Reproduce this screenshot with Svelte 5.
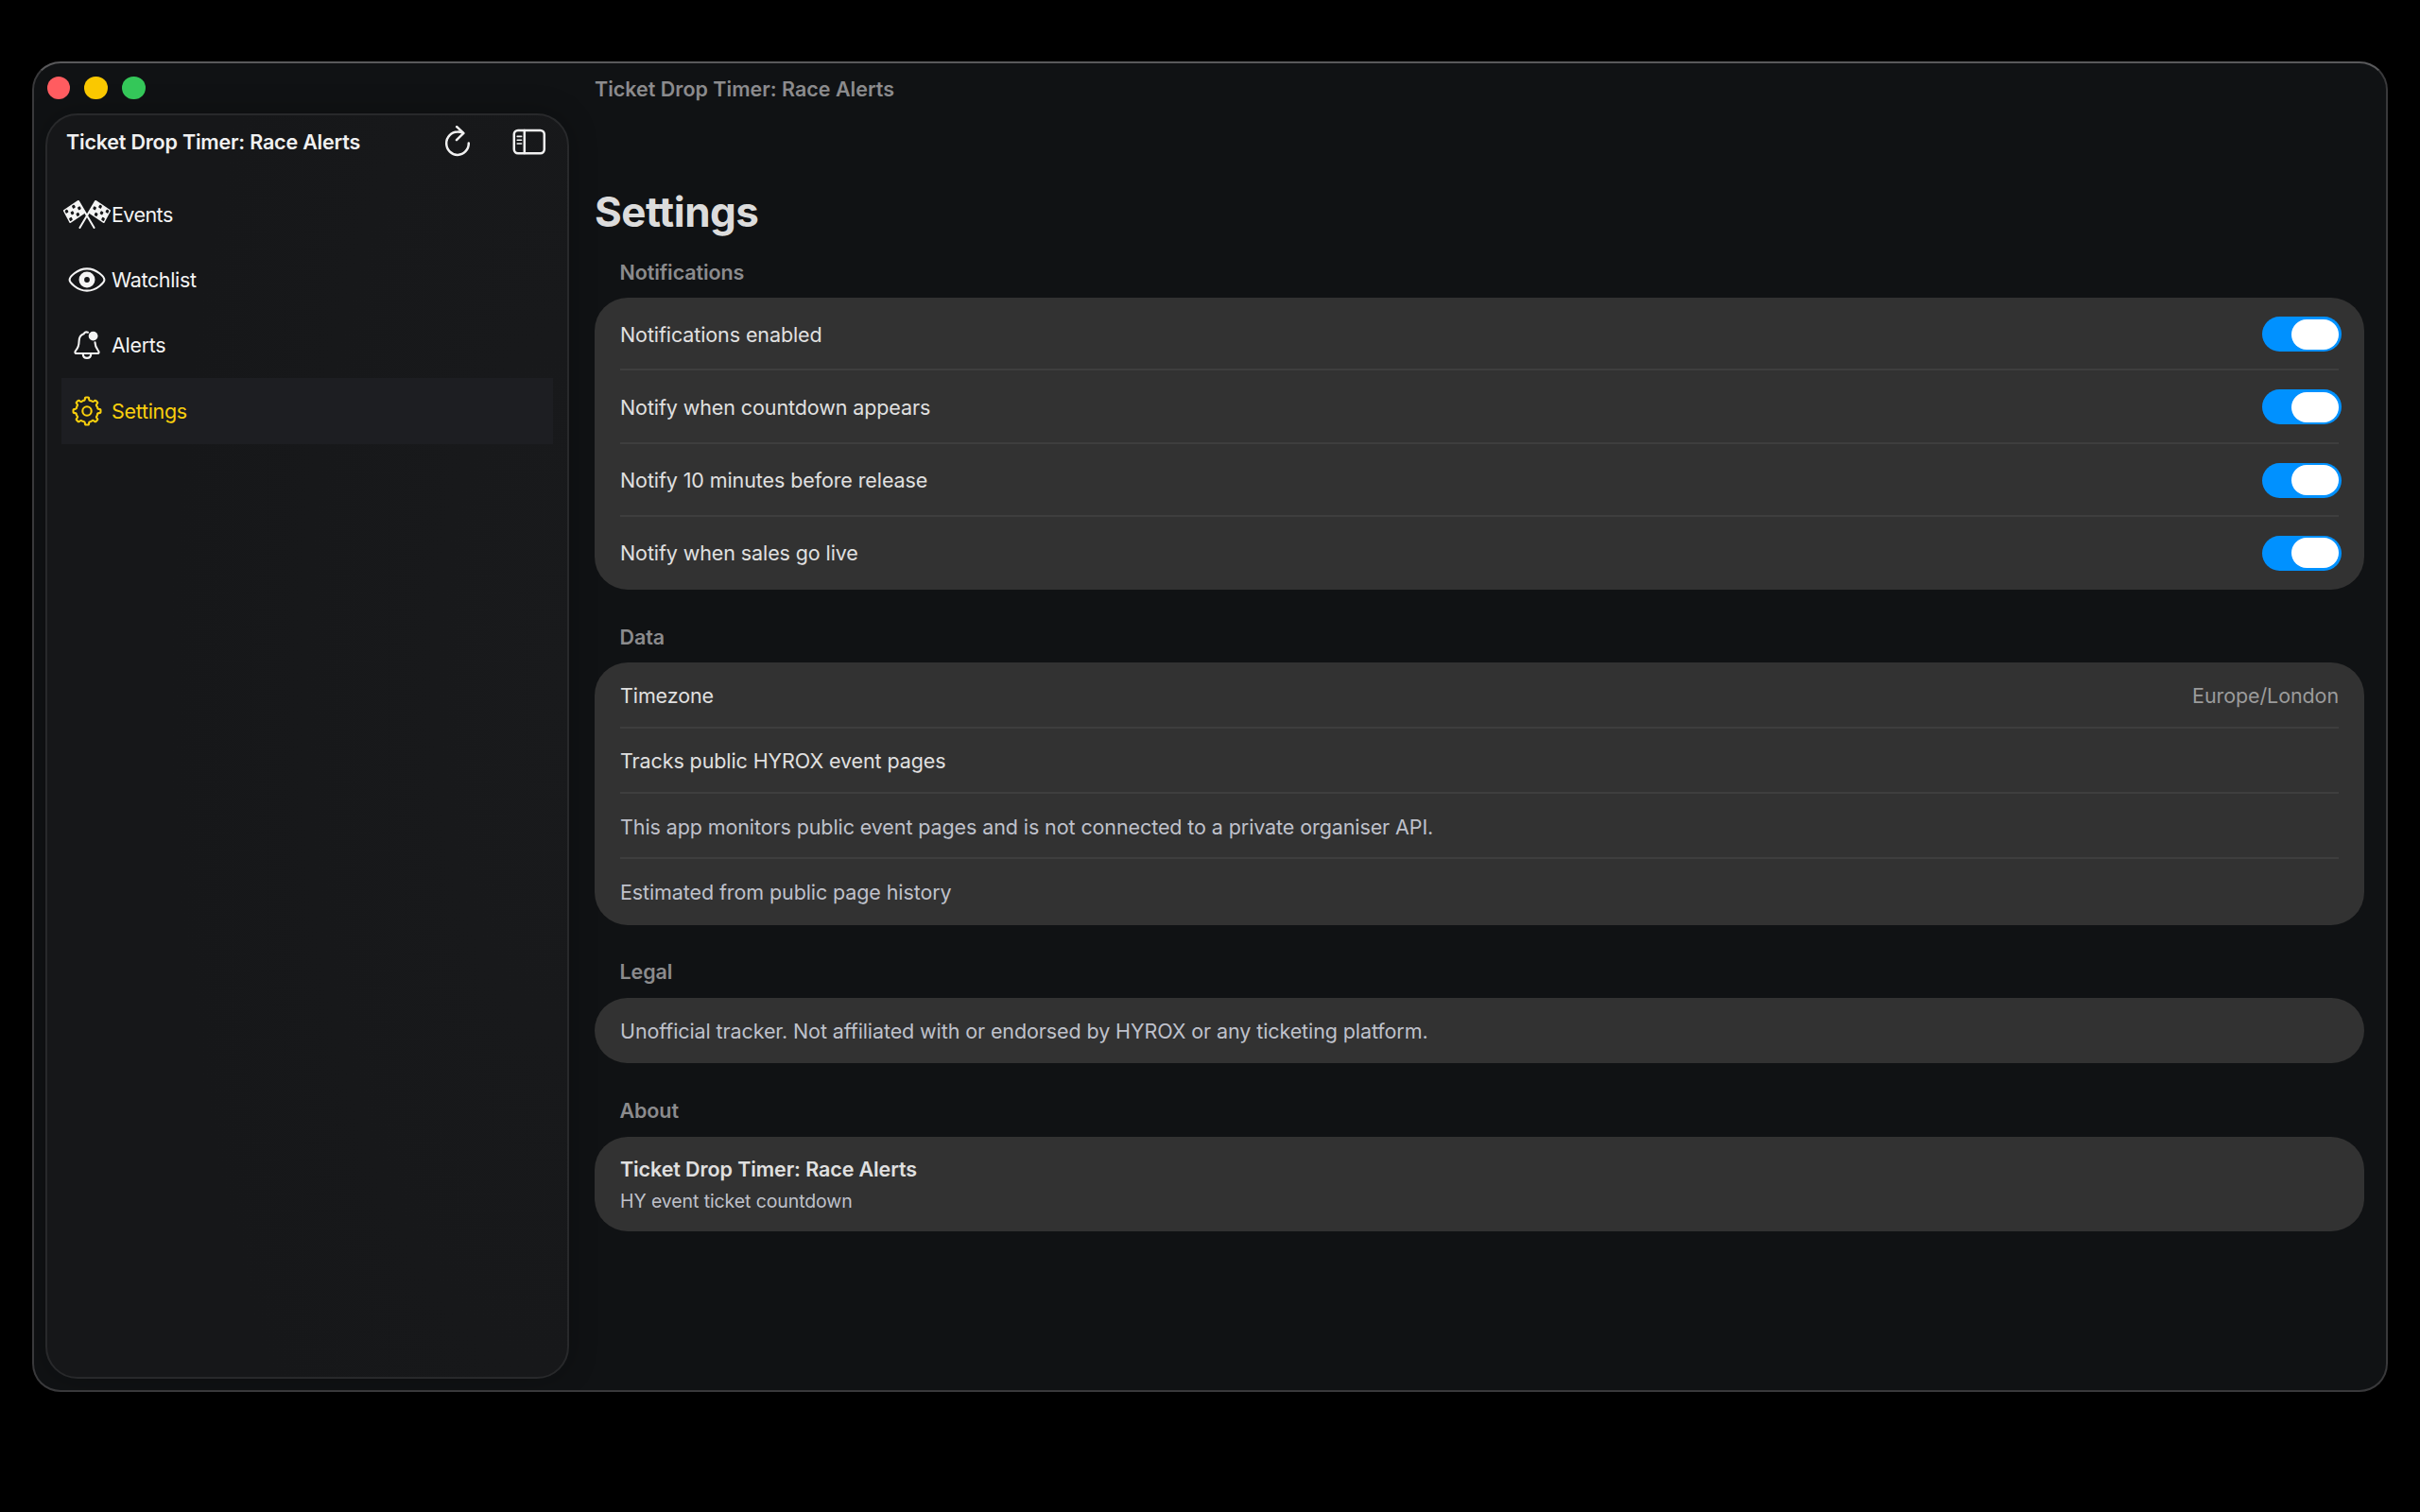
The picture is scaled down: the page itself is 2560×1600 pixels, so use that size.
<script>
    const appName = 'Ticket Drop Timer: Race Alerts';

    const navItems = [
        { id: 'events', label: 'Events', track: -0.55 },
        { id: 'watchlist', label: 'Watchlist', track: -0.35 },
        { id: 'alerts', label: 'Alerts', track: -0.3 },
        { id: 'settings', label: 'Settings', track: -0.3 }
    ];

    let selected = $state('settings');

    let toggles = $state([
        { label: 'Notifications enabled', on: true },
        { label: 'Notify when countdown appears', on: true },
        { label: 'Notify 10 minutes before release', on: true },
        { label: 'Notify when sales go live', on: true }
    ]);

    // dark cells of the 4x3 chequered flag
    const cells = [[1, 0], [3, 0], [0, 1], [2, 1], [1, 2], [3, 2]];

    // gear outline: eight rounded teeth around the centre
    function gearPath(cx, cy, teeth = 8) {
        const point = (r, deg) => {
            const a = (deg - 90) * Math.PI / 180;
            return `${(cx + r * Math.cos(a)).toFixed(2)} ${(cy + r * Math.sin(a)).toFixed(2)}`;
        };
        let d = '';
        for (let i = 0; i < teeth; i++) {
            const c = i * 360 / teeth;
            d += `${i ? 'L' : 'M'}${point(12.9, c - 9.5)} Q${point(14.7, c - 8.5)} ${point(14.5, c - 4)}`;
            d += ` L${point(14.5, c + 4)} Q${point(14.7, c + 8.5)} ${point(12.9, c + 9.5)}`;
            d += ` Q${point(11.2, c + 12)} ${point(11.6, c + 18)} L${point(11.8, c + 27)} Q${point(11.2, c + 33)} ${point(12.9, c + 35.5)}`;
        }
        return d + 'Z';
    }
</script>

<div class="window">
    <div class="left">
        <div class="lights">
            <span class="light red"></span>
            <span class="light yellow"></span>
            <span class="light green"></span>
        </div>

        <aside class="sidebar">
            <div class="sidebar-header">
                <span class="sidebar-title">{appName}</span>
                <button class="tool refresh" aria-label="Refresh">
                    <svg width="30" height="34" viewBox="0 0 30 34">
                        <path d="M26.8 18.5 A11.8 12.2 0 1 1 15 6.5 Q18 6.4 20.6 7.6" />
                        <path d="M14.2 1.2 L21.4 7.9 L14 15.2" />
                    </svg>
                </button>
                <button class="tool" aria-label="Toggle sidebar">
                    <svg width="36" height="28" viewBox="0 0 36 28">
                        <rect x="1.8" y="1.9" width="32" height="24.4" rx="4.2" />
                        <path d="M12.8 2 V26" />
                        <path class="thin" d="M5.2 8.4 H9.6 M5.2 12.2 H9.6 M5.2 16 H9.6" />
                    </svg>
                </button>
            </div>

            <nav>
                {#each navItems as item}
                    <button class="nav-item" class:active={selected === item.id} onclick={() => selected = item.id}>
                        <span class="nav-icon">
                            {#if item.id === 'events'}
                                <svg width="52" height="32" viewBox="0 0 52 32">
                                    {#each ['', 'translate(52 0) scale(-1 1)'] as flip}
                                        <g transform={flip}>
                                            <path class="pole" d="M17 2 L33.6 30" />
                                            <g transform="matrix(-3.7 2.5 2.2 4.1 16.4 1.9)">
                                                <rect class="cloth" width="4" height="3" />
                                                {#each cells as [x, y]}
                                                    <rect class="cell" x={x + 0.14} y={y + 0.14} width="0.72" height="0.72" rx="0.2" />
                                                {/each}
                                            </g>
                                        </g>
                                    {/each}
                                </svg>
                            {:else if item.id === 'watchlist'}
                                <svg width="42" height="28" viewBox="0 0 42 28">
                                    <path class="line" d="M2.6 14 C2.6 11.6 10 2.4 21 2.4 C32 2.4 39.4 11.6 39.4 14 C39.4 16.4 32 25.6 21 25.6 C10 25.6 2.6 16.4 2.6 14 Z" />
                                    <circle class="iris" cx="21" cy="14" r="5.7" />
                                </svg>
                            {:else if item.id === 'alerts'}
                                <svg width="30" height="32" viewBox="0 0 30 32">
                                    <path class="line" d="M16 2.7 C13.8 1.9 12.2 2.8 11.6 4.3 C7.9 5.5 6.7 8.6 6.6 12 C6.5 17.2 5.9 18.8 3.4 21.6 C1.8 23.4 2.1 25 4 25 H26 C27.9 25 28.2 23.4 26.6 21.6 C24.5 19.2 23.7 17.6 23.5 13.4" />
                                    <path class="line" d="M10.7 25.4 C11 31.4 19 31.4 19.3 25.4" />
                                    <circle class="dot" cx="21.6" cy="6.6" r="4.9" />
                                </svg>
                            {:else}
                                <svg width="32" height="32" viewBox="0 0 32 32">
                                    <path class="line" d={gearPath(16, 16)} />
                                    <circle class="line" cx="16" cy="16" r="4.7" />
                                </svg>
                            {/if}
                        </span>
                        <span class="nav-label" style="letter-spacing: {item.track}px">{item.label}</span>
                    </button>
                {/each}
            </nav>
        </aside>
    </div>

    <main>
        <div class="titlebar">{appName}</div>
        <h1>Settings</h1>

        <section>
            <h2>Notifications</h2>
            <div class="card">
                {#each toggles as toggle}
                    <div class="row tall">
                        <span>{toggle.label}</span>
                        <button class="switch" class:on={toggle.on} role="switch" aria-checked={toggle.on} aria-label={toggle.label} onclick={() => toggle.on = !toggle.on}>
                            <span class="knob"></span>
                        </button>
                    </div>
                {/each}
            </div>
        </section>

        <section>
            <h2>Data</h2>
            <div class="card">
                <div class="row"><span>Timezone</span><span class="value">Europe/London</span></div>
                <div class="row tight"><span>Tracks public HYROX event pages</span></div>
                <div class="row muted"><span>This app monitors public event pages and is not connected to a private organiser API.</span></div>
                <div class="row muted"><span>Estimated from public page history</span></div>
            </div>
        </section>

        <section>
            <h2>Legal</h2>
            <div class="card">
                <div class="row muted"><span>Unofficial tracker. Not affiliated with or endorsed by HYROX or any ticketing platform.</span></div>
            </div>
        </section>

        <section>
            <h2>About</h2>
            <div class="card about">
                <div class="about-title">{appName}</div>
                <div class="about-sub">HY event ticket countdown</div>
            </div>
        </section>
    </main>
</div>

<style>
    :global(body) {
        background: #000;
        overflow: hidden;
    }

    :global(#app) {
        display: flow-root;
    }

    .window {
        box-sizing: border-box;
        display: flex;
        width: 2492px;
        height: 1408px;
        margin: 65px 0 0 34px;
        border: 2px solid #39393b;
        border-top-color: #59595b;
        border-radius: 30px;
        background: #101214;
        overflow: hidden;
        font-family: Inter, "Liberation Sans", sans-serif;
        font-size: 21.5px;
        letter-spacing: -0.1px;
        color: #e0e0e0;
    }

    button {
        padding: 0;
        border: 0;
        background: none;
        color: inherit;
        font: inherit;
        text-align: left;
    }

    svg {
        display: block;
        fill: none;
        stroke: currentColor;
        stroke-linecap: round;
        stroke-linejoin: round;
    }

    .left {
        width: 566px;
        padding-left: 12px;
        flex: none;
    }

    .lights {
        display: flex;
        gap: 15.5px;
        height: 39px;
        padding: 14px 0 0 1.5px;
    }

    .light {
        width: 24.4px;
        height: 24.4px;
        border-radius: 50%;
    }

    .red { background: #ff5c60; }
    .yellow { background: #fac800; }
    .green { background: #34c759; }

    .sidebar {
        box-sizing: border-box;
        width: 554px;
        height: 1339px;
        border: 2px solid #28292b;
        border-radius: 34px;
        background: radial-gradient(ellipse 420px 1100px at 100% 45%, #191a1c, #161719);
        box-shadow: 0 0 30px rgba(0, 0, 0, 0.25);
    }

    .sidebar-header {
        display: flex;
        align-items: center;
        height: 55px;
        padding-left: 20px;
        color: #f1f1f1;
    }

    .sidebar-title {
        width: 399px;
        font-weight: 600;
        letter-spacing: -0.2px;
        white-space: nowrap;
    }

    .tool svg {
        stroke-width: 2.5;
    }

    .refresh {
        margin-right: 43px;
    }

    .thin {
        stroke-width: 1.6;
    }

    nav {
        width: 520px;
        margin: 15px 0 0 15px;
    }

    .nav-item {
        display: flex;
        align-items: center;
        width: 100%;
        height: 69.4px;
        color: #f4f4f4;
    }

    .nav-item.active {
        background: #1d1e22;
        color: #f9cf0d;
    }

    .nav-icon {
        display: flex;
        justify-content: center;
        width: 53px;
    }

    .line {
        stroke-width: 2.1;
    }

    .iris {
        stroke-width: 5.6;
    }

    .dot {
        fill: currentColor;
        stroke: none;
    }

    .pole {
        stroke-width: 2;
    }

    .cloth {
        fill: currentColor;
        stroke-width: 0.35;
    }

    .cell {
        fill: #17181a;
        stroke: none;
    }

    main {
        width: 1872px;
        margin-left: 15px;
    }

    .titlebar {
        height: 54.6px;
        line-height: 54.6px;
        font-weight: 600;
        letter-spacing: 0;
        color: #8b8b8d;
    }

    h1 {
        height: 76px;
        margin: 64px 0 0;
        font-size: 44px;
        font-weight: 700;
        line-height: 76px;
        letter-spacing: -0.5px;
        color: #dcdcdc;
    }

    section {
        margin-bottom: 23.7px;
    }

    h2 {
        height: 53.7px;
        margin: 0;
        padding-left: 26.5px;
        font-size: 21.5px;
        font-weight: 600;
        line-height: 53.7px;
        color: #8b8b8d;
    }

    .card {
        padding: 0 27px;
        border-radius: 35px;
        background: #323232;
    }

    .row {
        box-sizing: border-box;
        display: flex;
        align-items: center;
        justify-content: space-between;
        height: 69.35px;
    }

    .row.tall {
        height: 77.15px;
    }

    .row + .row {
        box-shadow: 0 -2px 0 #3e3e3e;
    }

    .muted {
        color: #bfc1cb;
    }

    .value {
        color: #9b9b9b;
    }

    .switch {
        display: flex;
        justify-content: flex-start;
        box-sizing: border-box;
        width: 84.5px;
        height: 37px;
        margin-right: -3px;
        padding: 2.3px 3px;
        border-radius: 19px;
        background: #5a5a5c;
    }

    .switch.on {
        justify-content: flex-end;
        background: #0091ff;
    }

    .knob {
        width: 49.7px;
        height: 32.4px;
        border-radius: 17px;
        background: #fff;
    }

    .about {
        box-sizing: border-box;
        height: 100.3px;
        padding-top: 17.2px;
    }

    .about-title {
        font-weight: 600;
        line-height: 34px;
    }

    .about-sub {
        font-size: 19.5px;
        line-height: 34px;
        color: #bfc1cb;
    }
</style>
